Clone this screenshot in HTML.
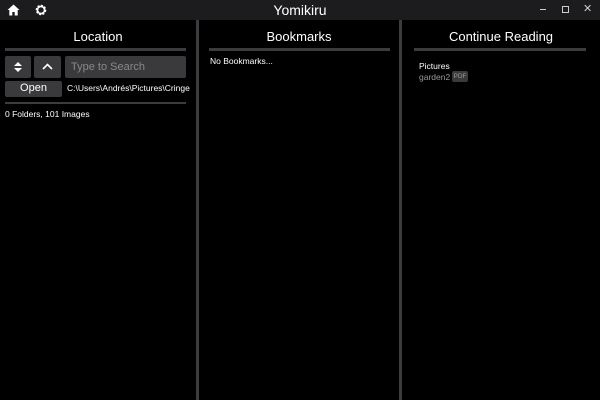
<!DOCTYPE html>
<html><head><style>
body{margin:0;width:600px;height:400px;background:#000;overflow:hidden;font-family:"Liberation Sans",sans-serif;color:#fff;position:relative}
.a{position:absolute}
.tb{left:0;top:0;width:600px;height:20px;background:#1c1c1e}
.bar{background:#3c3c3e}
.btn{background:#3a3a3c;border-radius:2px}
</style></head><body>
<div class="a tb"></div>
<svg class="a" style="left:7px;top:4px" width="13" height="12" viewBox="0 0 13 12"><path d="M6.5 0.5L0.5 6H2.3V11.5H5.3V8H7.7V11.5H10.7V6H12.5Z" fill="#fff"/></svg>
<svg class="a" style="left:35px;top:4px" width="12" height="12" viewBox="0 0 12 12"><circle cx="6" cy="6" r="4" fill="none" stroke="#fff" stroke-width="2.6" stroke-dasharray="1.8 1.3"/><circle cx="6" cy="6" r="3.6" fill="none" stroke="#fff" stroke-width="1.6"/></svg>
<div class="a" style="left:0;width:600px;top:2px;text-align:center;font-size:14px">Yomikiru</div>
<div class="a" style="left:540px;top:9px;width:6px;height:1px;background:#ccc"></div>
<div class="a" style="left:562px;top:6px;width:5px;height:5px;border:1px solid #ccc"></div>
<div class="a" style="left:583px;top:2px;font-size:11px;color:#ccc">✕</div>
<div class="a bar" style="left:196px;top:20px;width:3px;height:380px"></div>
<div class="a bar" style="left:399px;top:20px;width:3px;height:380px"></div>
<div class="a" style="left:0;width:196px;top:29px;text-align:center;font-size:13px">Location</div>
<div class="a" style="left:199px;width:200px;top:29px;text-align:center;font-size:13px">Bookmarks</div>
<div class="a" style="left:402px;width:198px;top:29px;text-align:center;font-size:13px">Continue Reading</div>
<div class="a bar" style="left:5px;top:48px;width:181px;height:3px"></div>
<div class="a bar" style="left:209px;top:48px;width:181px;height:3px"></div>
<div class="a bar" style="left:414px;top:48px;width:172px;height:3px"></div>
<div class="a btn" style="left:5px;top:56px;width:26px;height:22px"></div>
<svg class="a" style="left:13px;top:61px" width="10" height="12"><path d="M1 5L5 1L9 5Z M1 7L5 11L9 7Z" fill="#fff"/></svg>
<div class="a btn" style="left:34px;top:56px;width:27px;height:22px"></div>
<svg class="a" style="left:42px;top:63px" width="11" height="7"><path d="M1 6L5.5 1.5L10 6" fill="none" stroke="#fff" stroke-width="1.6"/></svg>
<div class="a btn" style="left:65px;top:56px;width:121px;height:22px"></div>
<div class="a" style="left:71px;top:61px;font-size:11px;color:#888">Type to Search</div>
<div class="a btn" style="left:5px;top:81px;width:57px;height:16px"></div>
<div class="a" style="left:5px;width:57px;top:82px;text-align:center;font-size:11px">Open</div>
<div class="a" style="left:67px;top:83px;font-size:8.5px">C:\Users\Andrés\Pictures\Cringe</div>
<div class="a bar" style="left:5px;top:102px;width:181px;height:2px"></div>
<div class="a" style="left:5px;top:109px;font-size:8.5px">0 Folders, 101 Images</div>
<div class="a" style="left:210px;top:56px;font-size:8.5px">No Bookmarks...</div>
<div class="a" style="left:419px;top:61px;font-size:8.5px">Pictures</div>
<div class="a" style="left:419px;top:72px;font-size:8.5px;color:#999">garden2</div>
<div class="a" style="left:452px;top:71px;width:16px;height:11px;background:#3a3a3c;border-radius:2px;font-size:6.5px;color:#999;text-align:center;line-height:11px">PDF</div>
</body></html>
